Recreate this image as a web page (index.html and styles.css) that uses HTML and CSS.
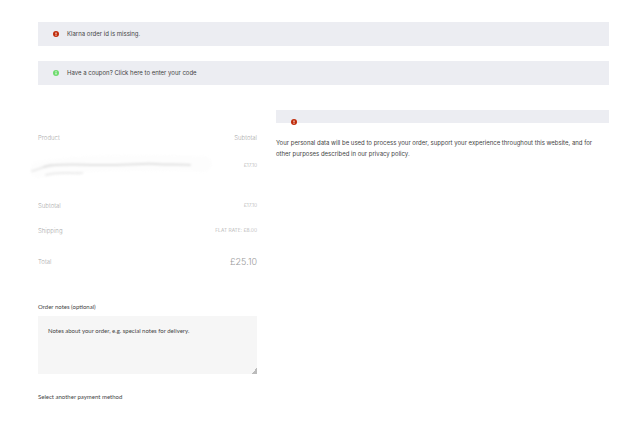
FILE: index.html
```
<!DOCTYPE html>
<html lang="en">
<head>
    <meta charset="UTF-8">
    <meta name="viewport" content="width=device-width, initial-scale=1.0">
    <title>Checkout</title>
    <link rel="stylesheet" href="styles.css">
</head>
<body>
    <!-- Notices -->
    <div class="notice error">
        <svg class="icon" viewBox="0 0 12 12"><circle cx="6" cy="6" r="6"/><path d="M6 3v4M6 8v1.5"/></svg>
        <span>Klarna order id is missing.</span>
    </div>
    <div class="notice info">
        <svg class="icon" viewBox="0 0 12 12"><circle cx="6" cy="6" r="6"/><path d="M6 2.5v1.5M6 5v4"/></svg>
        <span>Have a coupon? <a href="#">Click here to enter your code</a></span>
    </div>

    <form class="checkout">
        <div class="order">
            <table class="order-table">
                <thead>
                    <tr>
                        <th>Product</th>
                        <th>Subtotal</th>
                    </tr>
                </thead>
                <tbody>
                    <tr class="item">
                        <td>
                            <svg class="smudge" viewBox="0 0 160 30">
                                <path class="haze" d="M0 20C40 12 110 12 166 14"/>
                                <path class="soft" d="M-6 21C2 19 6 16 14 15"/>
                                <path d="M6 17C20 13 40 15 60 15C95 15 105 13 118 14C130 15 142 14 152 15"/>
                                <path class="soft" d="M8 25C20 21 30 24 44 23"/>
                            </svg>
                        </td>
                        <td>£17.10</td>
                    </tr>
                </tbody>
                <tfoot>
                    <tr>
                        <th>Subtotal</th>
                        <td>£17.10</td>
                    </tr>
                    <tr>
                        <th>Shipping</th>
                        <td>FLAT RATE: £8.00</td>
                    </tr>
                    <tr class="total">
                        <th>Total</th>
                        <td>£25.10</td>
                    </tr>
                </tfoot>
            </table>

            <label for="notes">Order notes (optional)</label>
            <textarea id="notes" placeholder="Notes about your order, e.g. special notes for delivery."></textarea>

            <a class="other-method" href="#">Select another payment method</a>
        </div>

        <div class="payment">
            <div class="notice error empty">
                <svg class="icon" viewBox="0 0 12 12"><circle cx="6" cy="6" r="6"/><path d="M6 3v4M6 8v1.5"/></svg>
            </div>
            <p>Your personal data will be used to process your order, support your experience throughout this website, and for other purposes described in our <a href="#">privacy policy</a>.</p>
        </div>
    </form>
</body>
</html>
```
FILE: styles.css
```
* {
    box-sizing: border-box;
}
body {
    margin: 0;
    padding: 22px 31px 24px 38px;
    background: #fff;
    color: #444;
    font-family: Inter, "Open Sans", sans-serif;
    font-size: 6px;
    line-height: 11px;
}
a {
    color: inherit;
    text-decoration: none;
}
.notice {
    display: flex;
    align-items: center;
    gap: 8px;
    height: 24px;
    margin-bottom: 15px;
    padding: 0 15px 1px;
    background: #ecedf2;
}
.icon {
    width: 6px;
    height: 6px;
    overflow: visible;
}
.icon path {
    stroke: #fff;
    stroke-width: 2;
}
.error .icon {
    fill: #c02b0a;
}
.info .icon {
    fill: #6ddb6d;
}
.checkout {
    display: grid;
    grid-template-columns: 219fr 333fr;
    gap: 19px;
    margin-top: 25px;
}

/* Order review */
.order {
    font-family: Lato, "Open Sans", sans-serif;
}
.order-table {
    width: 100%;
    margin: 15px 0 21px;
    border-collapse: collapse;
    color: #aaa;
    font-family: Inter, "Open Sans", sans-serif;
}
.order-table th,
.order-table td {
    height: 25px;
    padding: 0;
    font-weight: 300;
    text-align: left;
    white-space: nowrap;
}
.order-table td {
    font-size: 5px;
}
.order-table tr > :last-child {
    text-align: right;
}
.order-table .item td {
    height: 43px;
    padding-bottom: 13px;
}
.order-table .total > * {
    height: 37px;
}
.order-table .total td {
    color: #999;
    font-size: 9px;
}
.smudge {
    display: block;
    width: 160px;
    height: 30px;
    overflow: visible;
    fill: none;
    stroke: #e2e2e2;
    stroke-width: 2;
    stroke-linecap: round;
    filter: blur(1px);
}
.smudge .soft {
    stroke: #ececec;
}
.smudge .haze {
    stroke: #fdfdfd;
    stroke-width: 16;
}
label {
    display: block;
    margin-bottom: 4px;
}
textarea {
    display: block;
    width: 100%;
    height: 58px;
    margin-bottom: 17px;
    padding: 9px 10px;
    border: none;
    background: #f6f6f6;
    color: inherit;
    font: inherit;
    resize: vertical;
}
textarea::placeholder {
    color: #444;
}
textarea::-webkit-resizer {
    background: linear-gradient(135deg, transparent 80%, #bbb 80%);
}
.other-method {
    display: block;
}

/* Payment */
.payment .empty {
    height: 13px;
    margin-bottom: 14px;
    padding: 9px 15px 0;
    align-items: flex-start;
}
.payment p {
    margin: 0;
    padding-right: 8px;
}
```
